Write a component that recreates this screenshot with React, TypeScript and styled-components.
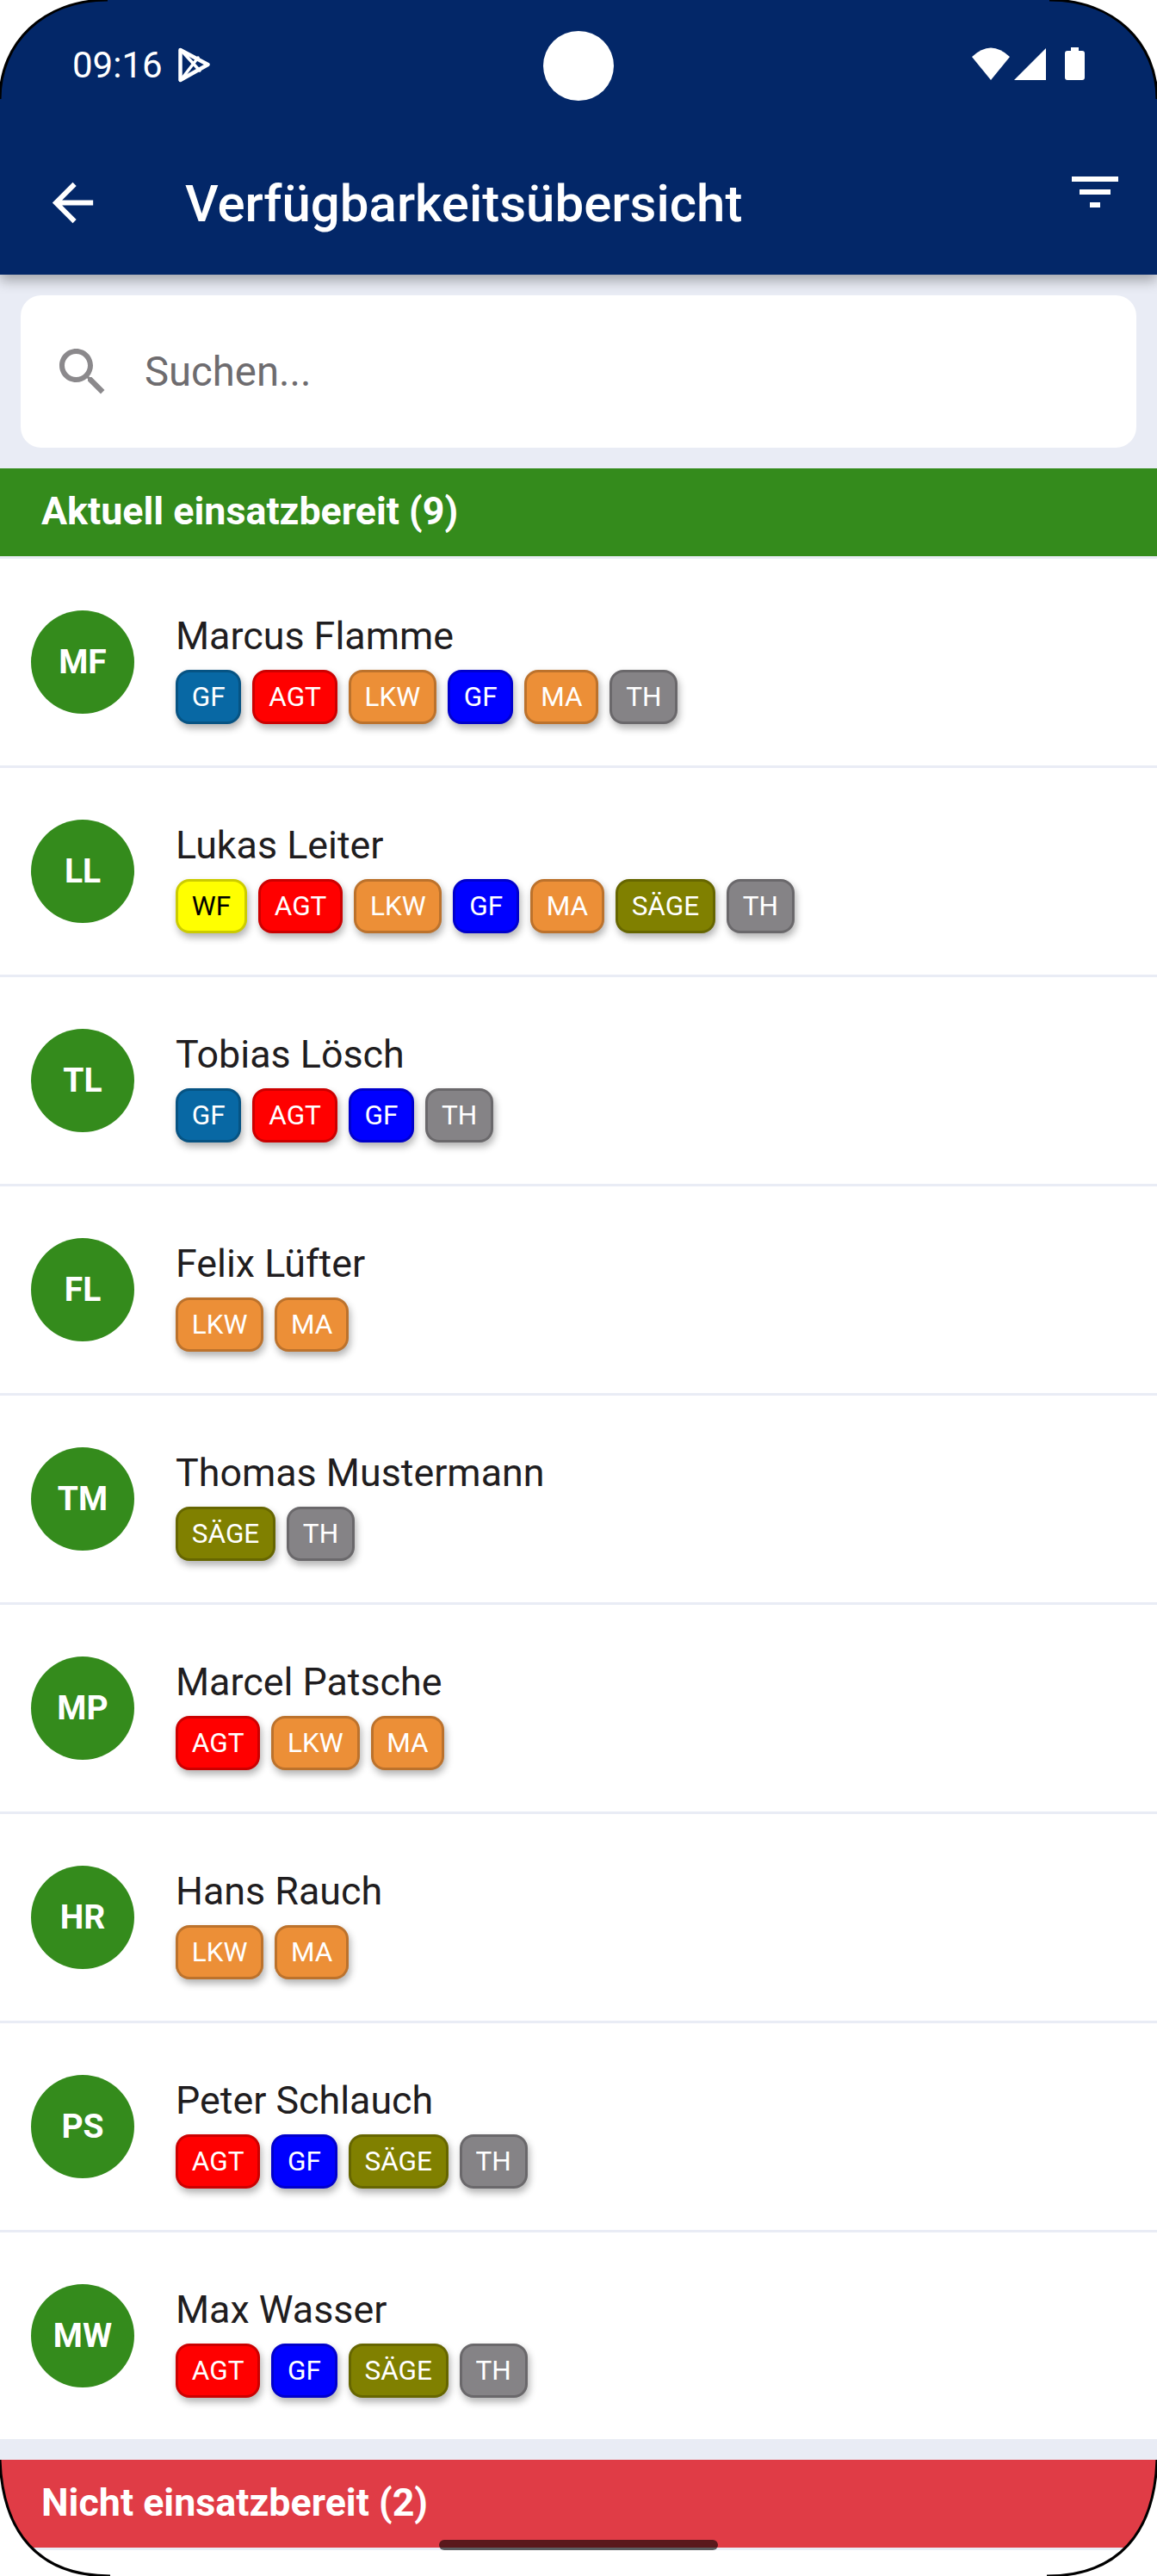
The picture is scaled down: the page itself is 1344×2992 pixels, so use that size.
import React from "react";
import styled, { createGlobalStyle } from "styled-components";

const GlobalStyle = createGlobalStyle`
    html, body {
        margin: 0;
        padding: 0;
        background: #fff;
    }
    * {
        box-sizing: border-box;
    }
`;

const Screen = styled.div`
    position: relative;
    width: 1344px;
    height: 2992px;
    overflow: hidden;
    display: flex;
    flex-direction: column;
    background: #e9ecf5;
    font-family: Roboto, "Liberation Sans", sans-serif;
`;

const Header = styled.header`
    position: relative;
    z-index: 1;
    height: 319px;
    background: #032768;
    color: #fff;
    box-shadow: 0 7px 14px rgba(0, 0, 0, 0.3);
`;

const StatusBar = styled.div`
    height: 152px;
    padding: 55px 84px 0 84px;
    display: flex;
    justify-content: space-between;
    align-items: flex-start;
`;

const StatusLeft = styled.div`
    display: flex;
    align-items: center;
    gap: 18px;
    height: 41px;
`;

const Clock = styled.span`
    font-size: 42px;
    line-height: 41px;
    font-weight: 400;
`;

const StatusRight = styled.div`
    display: flex;
    align-items: flex-end;
    gap: 5px;
`;

const Camera = styled.div`
    position: absolute;
    left: 631px;
    top: 36px;
    width: 82px;
    height: 81px;
    border-radius: 50%;
    background: #fff;
`;

const Toolbar = styled.div`
    position: relative;
    height: 167px;
    padding-left: 49px;
    display: flex;
    align-items: flex-start;
`;

const BackIcon = styled.svg`
    width: 71px;
    height: 71px;
    margin-top: 48px;
    fill: #fff;
`;

const Title = styled.h1`
    margin: 45px 0 0 95px;
    flex: 1;
    font-size: 60px;
    line-height: 80px;
    font-weight: 500;
`;

const FilterIcon = styled.svg`
    width: 72px;
    height: 72px;
    margin: 35px 36px 0 0;
    fill: #fff;
`;

const SearchCard = styled.div`
    margin: 24px 24px;
    height: 177px;
    border-radius: 24px;
    background: #fff;
    display: flex;
    align-items: center;
    padding-left: 36px;
`;

const SearchIcon = styled.svg`
    width: 72px;
    height: 72px;
    fill: #8b898c;
`;

const SearchText = styled.span`
    margin-left: 36px;
    font-size: 47.25px;
    color: #6e6c6f;
`;

const SectionHeader = styled.div<{ $tone: string }>`
    height: 102px;
    padding: 0 0 3px 48px;
    display: flex;
    align-items: center;
    background: ${(p) => p.$tone};
    color: #fff;
    font-size: 44.8px;
    font-weight: 700;
`;

const List = styled.div`
    margin-top: 3px;
    display: flex;
    flex-direction: column;
    gap: 3px;
`;

const Row = styled.div`
    height: 240px;
    padding: 60px 0 0 36px;
    display: flex;
    align-items: flex-start;
    background: #fff;
`;

const Avatar = styled.div`
    width: 120px;
    height: 120px;
    flex: none;
    border-radius: 50%;
    background: #348b1c;
    color: #fff;
    display: flex;
    align-items: center;
    justify-content: center;
    font-size: 39px;
    font-weight: 700;
`;

const Info = styled.div`
    margin: 2px 0 0 48px;
`;

const Name = styled.div`
    font-size: 44.8px;
    line-height: 56px;
    color: #1f1d20;
    margin-bottom: 11px;
`;

const Chips = styled.div`
    display: flex;
    gap: 13px;
`;

const Chip = styled.span<{ $bg: string; $fg?: string }>`
    height: 63px;
    padding: 0 15.8px;
    display: flex;
    align-items: center;
    border: 3px solid rgba(0, 0, 0, 0.2);
    border-radius: 16px;
    background: ${(p) => p.$bg};
    color: ${(p) => p.$fg || "#fff"};
    font-size: 31.5px;
    box-shadow: 2px 5px 8px rgba(0, 0, 0, 0.3);
`;

const SectionGap = styled.div`
    height: 24px;
`;

const EmptyList = styled.div`
    flex: 1;
    margin-top: 3px;
    background: #fff;
`;

const HomeBar = styled.div`
    position: absolute;
    z-index: 3;
    left: 510px;
    top: 2950px;
    width: 324px;
    height: 12px;
    border-radius: 6px;
    background: rgba(0, 0, 0, 0.6);
`;

const Corner = styled.svg<{ $spot: string }>`
    position: absolute;
    z-index: 4;
    width: 140px;
    height: 140px;
    ${(p) => (p.$spot[0] === "t" ? "top: 0;" : "bottom: 0;")}
    ${(p) => (p.$spot[1] === "l" ? "left: 0;" : "right: 0;")}
    transform: scale(${(p) => (p.$spot[1] === "l" ? 1 : -1)}, ${(p) => (p.$spot[0] === "t" ? 1 : -1)});
`;

const CHIP = {
    GFT: { label: "GF", bg: "#0868a4" },
    WF: { label: "WF", bg: "#ffff00", fg: "#000" },
    AGT: { label: "AGT", bg: "#ff0000" },
    LKW: { label: "LKW", bg: "#ec8f37" },
    GF: { label: "GF", bg: "#0000ff" },
    MA: { label: "MA", bg: "#ec8f37" },
    SAEGE: { label: "SÄGE", bg: "#808000" },
    TH: { label: "TH", bg: "#858386" },
};

type ChipKey = keyof typeof CHIP;

const people: { initials: string; name: string; chips: ChipKey[] }[] = [
    { initials: "MF", name: "Marcus Flamme", chips: ["GFT", "AGT", "LKW", "GF", "MA", "TH"] },
    { initials: "LL", name: "Lukas Leiter", chips: ["WF", "AGT", "LKW", "GF", "MA", "SAEGE", "TH"] },
    { initials: "TL", name: "Tobias Lösch", chips: ["GFT", "AGT", "GF", "TH"] },
    { initials: "FL", name: "Felix Lüfter", chips: ["LKW", "MA"] },
    { initials: "TM", name: "Thomas Mustermann", chips: ["SAEGE", "TH"] },
    { initials: "MP", name: "Marcel Patsche", chips: ["AGT", "LKW", "MA"] },
    { initials: "HR", name: "Hans Rauch", chips: ["LKW", "MA"] },
    { initials: "PS", name: "Peter Schlauch", chips: ["AGT", "GF", "SAEGE", "TH"] },
    { initials: "MW", name: "Max Wasser", chips: ["AGT", "GF", "SAEGE", "TH"] },
];

const DeviceCorner = ({ spot }: { spot: string }) => {
    const curve = spot[0] === "t" ? "M0 115 C0 50 50 0 125 0" : "M0 135 C3 50 45 0 128 0";
    return (
        <Corner $spot={spot} viewBox="0 0 140 140">
            <path d={`${curve} L0 0 Z`} fill="#fff" />
            <path d={curve} fill="none" stroke="#000" strokeWidth="3" />
        </Corner>
    );
};

const App = () => {
    return (
        <Screen>
            <GlobalStyle />
            <Header>
                <StatusBar>
                    <StatusLeft>
                        <Clock>09:16</Clock>
                        <svg width="37" height="41" viewBox="208 55 37 41" fill="none" stroke="#fff" strokeWidth="4.5" strokeLinejoin="round" strokeLinecap="round">
                            <path d="M210.5 58 L242.5 75 L210.5 93 Z" />
                            <path d="M211 58 L233 82 M211 93 L231 67" strokeWidth="3.5" />
                        </svg>
                    </StatusLeft>
                    <StatusRight>
                        <svg width="44" height="38" viewBox="1129 55 44 38" fill="#fff">
                            <path d="M1129 66 Q1151 45 1173 66 L1151 93 Z" />
                        </svg>
                        <svg width="37" height="37" viewBox="1178 56 37 37" fill="#fff">
                            <path d="M1178 93 L1215 56 L1215 93 Z" />
                        </svg>
                        <svg width="23" height="38" viewBox="1237 55 23 38" fill="#fff" style={{ marginLeft: 17 }}>
                            <path d="M1244 55 H1253 V59 H1257 Q1260 59 1260 62 V90 Q1260 93 1257 93 H1240 Q1237 93 1237 90 V62 Q1237 59 1240 59 H1244 Z" />
                        </svg>
                    </StatusRight>
                </StatusBar>
                <Camera />
                <Toolbar>
                    <BackIcon viewBox="0 0 24 24">
                        <path d="M20 11H7.83l5.59-5.59L12 4l-8 8 8 8 1.41-1.41L7.83 13H20v-2z" />
                    </BackIcon>
                    <Title>Verfügbarkeitsübersicht</Title>
                    <FilterIcon viewBox="0 0 24 24">
                        <path d="M10 18h4v-2h-4v2zM3 6v2h18V6H3zm3 7h12v-2H6v2z" />
                    </FilterIcon>
                </Toolbar>
            </Header>
            <SearchCard>
                <SearchIcon viewBox="0 0 24 24">
                    <path d="M15.5 14h-.79l-.28-.27C15.41 12.59 16 11.11 16 9.5 16 5.91 13.09 3 9.5 3S3 5.91 3 9.5 5.91 16 9.5 16c1.61 0 3.09-.59 4.23-1.57l.27.28v.79l5 4.99L20.49 19l-4.99-5zm-6 0C7.01 14 5 11.99 5 9.5S7.01 5 9.5 5 14 7.01 14 9.5 11.99 14 9.5 14z" />
                </SearchIcon>
                <SearchText>Suchen...</SearchText>
            </SearchCard>
            <SectionHeader $tone="#348b1c">Aktuell einsatzbereit (9)</SectionHeader>
            <List>
                {people.map((person) => (
                    <Row key={person.initials}>
                        <Avatar>{person.initials}</Avatar>
                        <Info>
                            <Name>{person.name}</Name>
                            <Chips>
                                {person.chips.map((key, index) => (
                                    <Chip key={index} $bg={CHIP[key].bg} $fg={"fg" in CHIP[key] ? (CHIP[key] as { fg: string }).fg : undefined}>
                                        {CHIP[key].label}
                                    </Chip>
                                ))}
                            </Chips>
                        </Info>
                    </Row>
                ))}
            </List>
            <SectionGap />
            <SectionHeader $tone="#e03c46">Nicht einsatzbereit (2)</SectionHeader>
            <EmptyList />
            <HomeBar />
            <DeviceCorner spot="tl" />
            <DeviceCorner spot="tr" />
            <DeviceCorner spot="bl" />
            <DeviceCorner spot="br" />
        </Screen>
    );
};

export default App;
